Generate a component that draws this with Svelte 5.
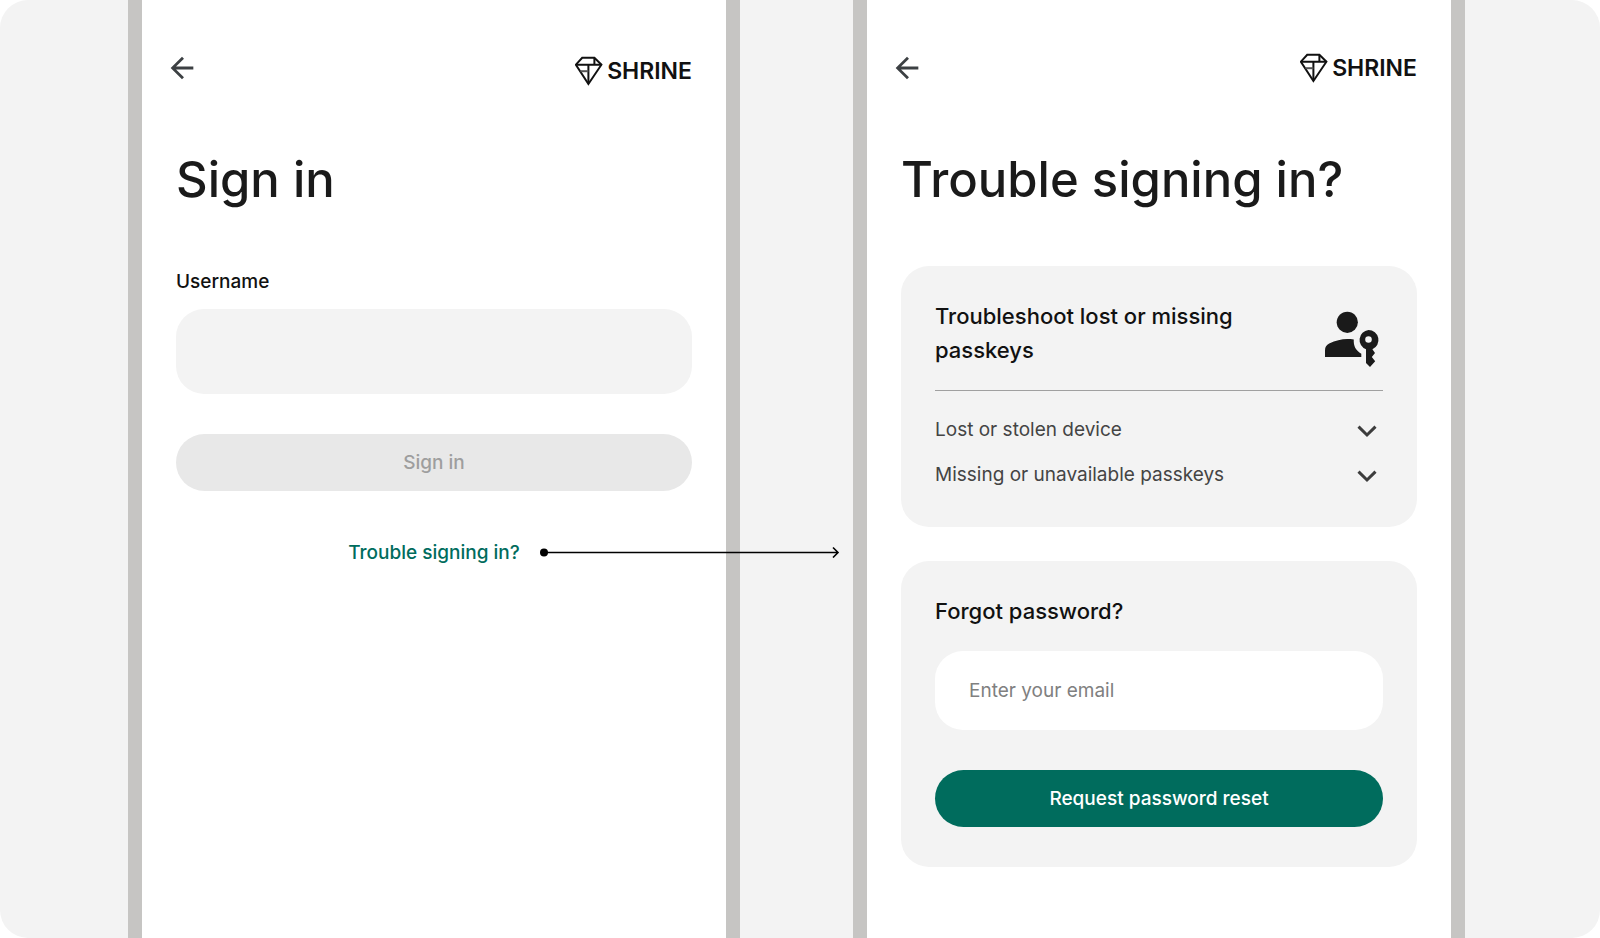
<script lang="ts">
	let username = "";
	let email = "";
	let openTopic = "";

	const topics = ["Lost or stolen device", "Missing or unavailable passkeys"];

	function toggleTopic(topic: string) {
		openTopic = openTopic === topic ? "" : topic;
	}
</script>

{#snippet backButton()}
	<button class="back" type="button" aria-label="Back">
		<svg viewBox="0 0 24 24" width="34" height="34" aria-hidden="true">
			<path d="M20 11H7.8l5.6-5.6L12 4l-8 8 8 8 1.4-1.4L7.8 13H20z" />
		</svg>
	</button>
{/snippet}

{#snippet logo()}
	<div class="logo">
		<svg viewBox="0 0 28 30" width="28" height="30" aria-hidden="true">
			<path d="M7.2 1.8h12.2l7 6.9-13 19.3L.9 8.7z" />
			<path d="M1 8.7h25.4M19.4 2v6.7M13.4 8.7v18.5" />
			<path class="facet" d="M5.4 15.2h8" />
		</svg>
		<span>SHRINE</span>
	</div>
{/snippet}

<main class="canvas">
	<section class="phone">
		<header class="low">
			{@render backButton()}
			{@render logo()}
		</header>

		<h1>Sign in</h1>

		<form class="signin">
			<label for="username">Username</label>
			<input id="username" class="field" type="text" bind:value={username} />
			<button class="submit" type="submit" disabled={!username}>Sign in</button>
		</form>

		<div class="trouble">
			<a href="#trouble">Trouble signing in?</a>
			<svg class="connector" viewBox="0 0 300 12" width="300" height="12" aria-hidden="true">
				<circle cx="4" cy="6.5" r="4" />
				<path d="M4 6.5h294M293 1.5l5 5-5 5" />
			</svg>
		</div>
	</section>

	<section class="phone" id="trouble">
		<header>
			{@render backButton()}
			{@render logo()}
		</header>

		<h1>Trouble signing in?</h1>

		<div class="card">
			<div class="card-head">
				<h2>Troubleshoot lost or missing passkeys</h2>
				<svg viewBox="0 0 60 57" width="60" height="57" aria-hidden="true">
					<circle cx="24.3" cy="12.3" r="10.6" />
					<path d="M2 47v-6.6c0-3.2 1.4-5.4 4.2-6.8C12.4 30.5 18.4 29 24.3 29c2.2 0 4.3.1 6.5.4-.5 6.6 2 11 7.5 14.3V47z" />
					<path
						fill-rule="evenodd"
						d="M45.5 20a10 10 0 0 1 3.9 19.2l2.6 3.7-3.2 4.2 3.4 4.2-5.2 5.6-4-4V39.3A10 10 0 0 1 45.5 20zm0 6.2a3.3 3.3 0 1 0 0 6.6 3.3 3.3 0 0 0 0-6.6z"
					/>
				</svg>
			</div>
			<div class="topics">
				{#each topics as topic}
					<button
						class="topic"
						type="button"
						aria-expanded={openTopic === topic}
						on:click={() => toggleTopic(topic)}
					>
						<span>{topic}</span>
						<svg viewBox="0 0 32 32" width="32" height="32" aria-hidden="true">
							<path d="M7.5 12.6l8.5 8.4 8.5-8.4" />
						</svg>
					</button>
				{/each}
			</div>
		</div>

		<form class="card forgot">
			<h2>Forgot password?</h2>
			<input
				class="field email"
				type="email"
				aria-label="Email"
				placeholder="Enter your email"
				bind:value={email}
			/>
			<button class="submit" type="submit">Request password reset</button>
		</form>
	</section>
</main>

<style>
	:global(body) {
		margin: 0;
		background: #fff;
	}

	.canvas {
		display: flex;
		gap: 113px;
		min-height: 100vh;
		box-sizing: border-box;
		padding: 0 135px 0 128px;
		background: #f3f3f3;
		border-radius: 28px;
		font-family: Inter, "Google Sans", sans-serif;
		font-size: 19px;
		line-height: 24px;
		color: #111;
	}

	.phone {
		flex: 1;
		min-width: 0;
		box-sizing: border-box;
		padding: 48px 34px;
		background: #fff;
		border: solid #c6c5c3;
		border-width: 0 14px;
	}

	header {
		display: flex;
		align-items: center;
		justify-content: space-between;
		height: 40px;
		margin-left: -11px;
	}

	.low .logo {
		align-self: flex-end;
	}

	button,
	input {
		font: inherit;
		border: none;
	}

	button {
		cursor: pointer;
	}

	.back {
		display: flex;
		padding: 0;
		background: none;
		fill: #3c4043;
	}

	.logo {
		display: flex;
		align-items: center;
		gap: 4px;
		height: 34px;
		font-size: 23px;
		font-weight: 600;
	}

	.logo svg {
		fill: none;
		stroke: #111;
		stroke-width: 2;
	}

	.logo .facet {
		stroke: #555;
	}

	h1 {
		margin: 62px 0 0;
		font-size: 49px;
		font-weight: 500;
		line-height: 60px;
		color: #1a1a1a;
	}

	h2 {
		margin: 0;
		font-size: 22px;
		font-weight: 500;
		line-height: 34px;
	}

	.signin {
		display: flex;
		flex-direction: column;
		margin-top: 60px;
	}

	label {
		margin-bottom: 15px;
		font-weight: 500;
	}

	.field {
		width: 100%;
		height: 85px;
		box-sizing: border-box;
		padding: 0 34px;
		background: #f3f3f3;
		border-radius: 28px;
	}

	.submit {
		width: 100%;
		height: 57px;
		margin-top: 40px;
		background: #006c5d;
		border-radius: 29px;
		color: #fff;
		font-weight: 500;
	}

	.submit:disabled {
		background: #e8e8e8;
		color: #9e9e9e;
		cursor: default;
	}

	.trouble {
		position: relative;
		width: fit-content;
		margin: 50px auto 0;
	}

	a {
		color: #006c5d;
		font-weight: 500;
		text-decoration: none;
	}

	.connector {
		position: absolute;
		left: calc(100% + 20px);
		top: 5px;
	}

	.connector path {
		fill: none;
		stroke: #000;
		stroke-width: 1.6;
	}

	.card {
		margin-top: 56px;
		padding: 33px 34px 30px;
		background: #f3f3f3;
		border-radius: 28px;
	}

	.card-head {
		display: flex;
		align-items: flex-end;
		justify-content: space-between;
		gap: 16px;
		padding-bottom: 23px;
		border-bottom: 1px solid #a0a0a0;
	}

	.card-head svg {
		flex: none;
		fill: #1a1a1a;
	}

	.topics {
		padding-top: 16px;
	}

	.topic {
		display: flex;
		align-items: center;
		justify-content: space-between;
		width: 100%;
		height: 45px;
		padding: 0;
		background: none;
		color: #444;
		text-align: left;
	}

	.topic svg {
		fill: none;
		stroke: #3c3c3c;
		stroke-width: 3;
	}

	.forgot {
		margin-top: 34px;
		padding-bottom: 40px;
	}

	.email {
		height: 79px;
		margin-top: 23px;
		background: #fff;
	}

	.email::placeholder {
		color: #808080;
		opacity: 1;
	}
</style>
